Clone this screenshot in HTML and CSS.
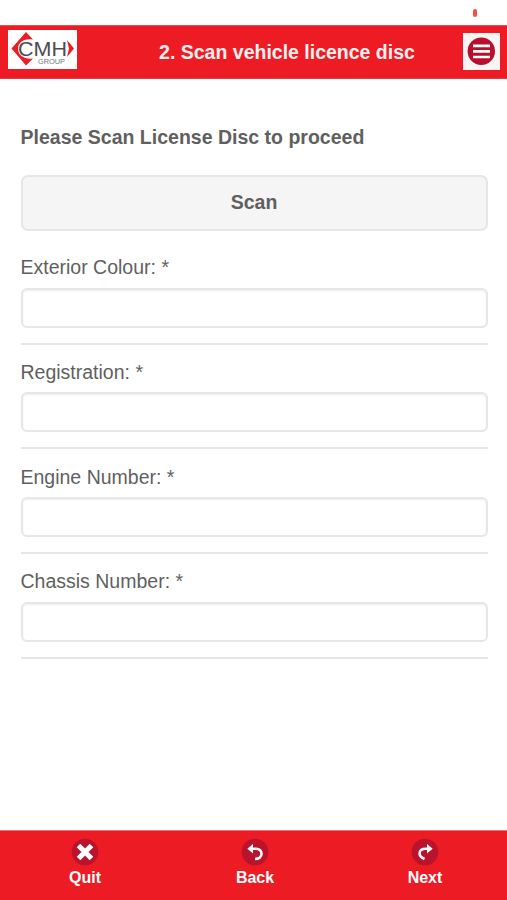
FILE: index.html
```html
<!DOCTYPE html>
<html lang="en">
<head>
<meta charset="utf-8">
<title>Scan vehicle licence disc</title>
<link rel="stylesheet" href="styles.css">
</head>
<body>
<div class="status"><span class="battery"></span></div>
<header class="header">
  <svg class="logo" width="69" height="39" viewBox="0 0 69 39">
    <rect width="69" height="39" fill="#fff"/>
    <path d="M18 2 3.500 18.500 18 35.500 25 28.500C15 30 10 24 10 18.500S15 8 25 9.500Z" fill="#ee1b25"/>
    <path d="M59 10 66 18.500 59 27 61 18.500Z" fill="#ee1b25"/>
    <text class="logo-name" x="10" y="25.500" textLength="49" lengthAdjust="spacingAndGlyphs">CMH</text>
    <text class="logo-group" x="30" y="33.500" textLength="27" lengthAdjust="spacingAndGlyphs">GROUP</text>
  </svg>
  <h1 class="title">2. Scan vehicle licence disc</h1>
  <button class="menu" aria-label="Menu">
    <svg width="37" height="37" viewBox="0 0 37 37">
      <circle cx="18.3" cy="18.2" r="13.7" fill="#b80f2d"/>
      <path d="M10 12.8H27M10 18.4H27M10 24H27" stroke="#fff" stroke-width="2.7"/>
    </svg>
  </button>
</header>
<main class="main">
  <h2 class="prompt">Please Scan License Disc to proceed</h2>
  <button class="scan">Scan</button>
  <div class="field"><label class="label" for="colour">Exterior Colour: *</label><input class="input" id="colour"></div>
  <div class="field"><label class="label" for="registration">Registration: *</label><input class="input" id="registration"></div>
  <div class="field"><label class="label" for="engine">Engine Number: *</label><input class="input" id="engine"></div>
  <div class="field"><label class="label" for="chassis">Chassis Number: *</label><input class="input" id="chassis"></div>
</main>
<footer class="footer">
  <a class="action">
    <svg width="28" height="28" viewBox="0 0 28 28"><circle cx="14" cy="14" r="13.3" fill="#b9142c"/><path d="m7.5 7.5 13 13M20.5 7.5 7.5 20.5" stroke="#fff" stroke-width="5"/></svg>
    <span>Quit</span>
  </a>
  <a class="action">
    <svg width="28" height="28" viewBox="0 0 28 28"><circle cx="14" cy="14" r="13.3" fill="#b9142c"/><path d="M10 10.8H15C22.5 10.8 22.5 21 14 21" fill="none" stroke="#fff" stroke-width="2.6"/><path d="M6.3 10.8 12 6V15.5Z" fill="#fff"/></svg>
    <span>Back</span>
  </a>
  <a class="action">
    <svg width="28" height="28" viewBox="0 0 28 28"><circle cx="14" cy="14" r="13.3" fill="#b9142c"/><path d="M17 10.8H15C7 10.8 6.5 18 13.5 21" fill="none" stroke="#fff" stroke-width="2.6"/><path d="M21.7 10.8 16 6V15.5Z" fill="#fff"/></svg>
    <span>Next</span>
  </a>
</footer>
</body>
</html>
```
FILE: styles.css
```css
* { box-sizing: border-box; }
body {
  margin: 0;
  height: 900px;
  display: flex;
  flex-direction: column;
  background: #fff;
  color: #5f5f5f;
  font-family: "Liberation Sans", Arial, sans-serif;
  overflow: hidden;
}
.status {
  height: 25px;
  display: flex;
  justify-content: flex-end;
  padding: 9px 30px 0 0;
}
.battery { width: 4px; height: 8px; border-radius: 2px; background: #f94c40; }
.header {
  height: 54px;
  display: flex;
  justify-content: space-between;
  align-items: flex-start;
  padding: 4px 7px 0 8px;
  background: #ed1b24;
  border-top: 1px solid #ee4b50;
  border-bottom: 1px solid #e83b40;
}
.logo { display: block; }
.logo-name { font: 20px "Liberation Sans", Arial, sans-serif; fill: #4c4c50; }
.logo-group { font: 7px "Liberation Sans", Arial, sans-serif; fill: #77777b; }
.title {
  margin: 10px 0 0 34px;
  font-size: 19.5px;
  line-height: 24px;
  color: #fff0f0;
  white-space: nowrap;
}
.menu { width: 37px; height: 37px; margin-top: 3px; padding: 0; border: 0; background: #faf4f5; }
.menu svg { display: block; }
.main { flex: 1; padding: 46px 19.5px 0 20.5px; }
.prompt { margin: 0; font-size: 19.53px; line-height: 24px; white-space: nowrap; }
.scan {
  display: block;
  width: 100%;
  height: 56px;
  margin: 26px 0 20px;
  padding: 0 0 1px;
  border: 2px solid #e6e6e6;
  border-radius: 7px;
  background: #f5f5f5;
  color: #5f5f5f;
  font: bold 19.5px "Liberation Sans", Arial, sans-serif;
}
.field { height: 104.75px; padding-top: 4px; }
.field::after { content: ""; display: block; height: 2px; margin-top: 15px; background: #e6e6e6; }
.label { display: block; height: 32.5px; font-size: 19.5px; line-height: 24px; }
.input {
  display: block;
  width: 100%;
  height: 40px;
  padding: 0 8px;
  border: 2px solid #e7e7e7;
  border-radius: 6px;
  background: #fff;
  box-shadow: inset 0 1px 2px #eee;
  font: inherit;
}
.footer {
  height: 70px;
  display: flex;
  justify-content: space-between;
  padding: 7px 49px 0 52px;
  background: #ed1b24;
  border-top: 1px solid #ef777b;
}
.action {
  width: 66px;
  display: flex;
  flex-direction: column;
  align-items: center;
  color: #fff;
  font-size: 16px;
  font-weight: bold;
  line-height: 20px;
}
.action span { margin-top: 2px; }
```
